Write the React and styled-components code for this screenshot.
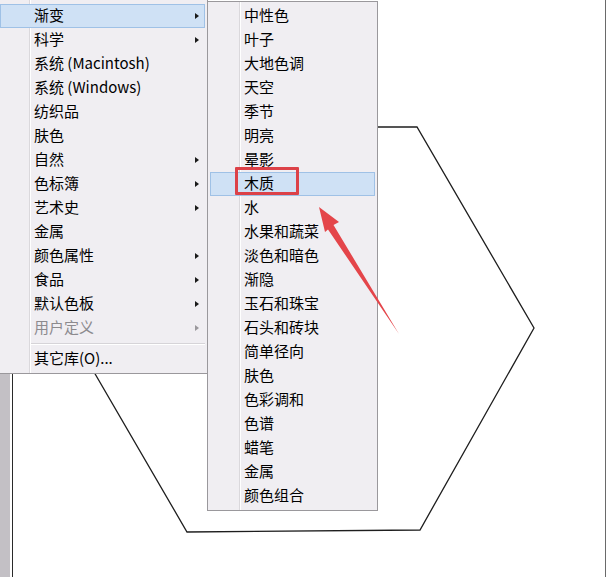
import React from "react";
import styled, { createGlobalStyle } from "styled-components";

const Global = createGlobalStyle`
  html, body { margin: 0; padding: 0; background: #fff; }
  body { font-family: "Noto Sans CJK SC", "Noto Sans", sans-serif; }
  #root { width: 608px; height: 577px; overflow: hidden; }
`;

const Page = styled.div`
  position: relative;
  width: 608px;
  height: 577px;
  display: flex;
  background: #fff;
  overflow: hidden;
`;

const Rail = styled.div`
  width: 10px;
  background: #c3c0c5;
  margin-right: 2px;
`;

const Canvas = styled.div`
  position: relative;
  flex: 1;
  border-left: 1px solid #2a2a2a;
  border-right: 1px solid #6a6a6a;
  margin-right: 2px;
  background: #fff;
`;

const Drawing = styled.svg`
  position: absolute;
  left: -13px;
  top: 0;
  width: 608px;
  height: 577px;
`;

const Menu = styled.div`
  position: absolute;
  left: ${(p) => p.$left}px;
  top: ${(p) => p.$top}px;
  width: ${(p) => p.$width}px;
  box-sizing: border-box;
  background: #f0eef2;
  border: 1px solid #9a989c;
  padding: ${(p) => p.$padTop}px 2px 2px 2px;
  display: flex;
  flex-direction: column;
  z-index: ${(p) => p.$z};
`;

const Gutter = styled.div`
  position: absolute;
  top: 0;
  bottom: 0;
  left: 31px;
  width: 1px;
  background: #dad8dc;
  box-shadow: 1px 0 0 #ffffff;
`;

const Item = styled.div`
  position: relative;
  height: 24px;
  box-sizing: border-box;
  display: flex;
  align-items: center;
  padding-left: 34px;
  padding-right: 6px;
  padding-bottom: 2px;
  font-size: 15px;
  line-height: 20px;
  color: ${(p) => (p.$disabled ? "#8c8a8e" : "#000")};
  background: ${(p) => (p.$active ? "#cfe1f5" : "transparent")};
  border: 1px solid ${(p) => (p.$active ? "#9fc1e6" : "transparent")};
  z-index: 1;
  white-space: nowrap;
`;

const Label = styled.span`
  flex: 1;
  margin-left: -1px;
`;

const Arrow = styled.span`
  width: 0;
  height: 0;
  border-top: 3.5px solid transparent;
  border-bottom: 3.5px solid transparent;
  border-left: 4px solid ${(p) => (p.$disabled ? "#9a989c" : "#1a1a1a")};
  margin-right: -1px;
  margin-top: 2px;
`;

const Separator = styled.div`
  height: 7px;
  display: flex;
  align-items: center;
  padding-left: 30px;
  &::after {
    content: "";
    flex: 1;
    height: 1px;
    background: #d6d4d8;
    box-shadow: 0 1px 0 #ffffff;
  }
`;

const Callout = styled.div`
  position: absolute;
  left: 235px;
  top: 167px;
  width: 64px;
  height: 28px;
  box-sizing: border-box;
  border: 3px solid #dc4148;
  border-radius: 1px;
  z-index: 5;
`;

const Pointer = styled.svg`
  position: absolute;
  left: 0;
  top: 0;
  width: 608px;
  height: 577px;
  z-index: 6;
  pointer-events: none;
`;

const mainItems = [
  { t: "渐变", sub: true, active: true },
  { t: "科学", sub: true },
  { t: "系统 (Macintosh)" },
  { t: "系统 (Windows)" },
  { t: "纺织品" },
  { t: "肤色" },
  { t: "自然", sub: true },
  { t: "色标簿", sub: true },
  { t: "艺术史", sub: true },
  { t: "金属" },
  { t: "颜色属性", sub: true },
  { t: "食品", sub: true },
  { t: "默认色板", sub: true },
  { t: "用户定义", sub: true, disabled: true },
];

const subItems = [
  "中性色", "叶子", "大地色调", "天空", "季节", "明亮", "晕影", "木质", "水",
  "水果和蔬菜", "淡色和暗色", "渐隐", "玉石和珠宝", "石头和砖块", "简单径向",
  "肤色", "色彩调和", "色谱", "蜡笔", "金属", "颜色组合",
];

export default function App() {
  return (
    <>
      <Global />
      <Page>
        <Rail />
        <Canvas>
          <Drawing viewBox="0 0 608 577">
            <polygon
              points="187,127 417,127 534,328 420,530 187,532 69,329"
              fill="none"
              stroke="#1e1e1e"
              strokeWidth="1.3"
            />
          </Drawing>
        </Canvas>

        <Menu $left={-3} $top={-1} $width={211} $padTop={4} $z={2}>
          <Gutter />
          {mainItems.map((it) => (
            <Item key={it.t} $active={it.active} $disabled={it.disabled}>
              <Label>{it.t}</Label>
              {it.sub && <Arrow $disabled={it.disabled} />}
            </Item>
          ))}
          <Separator />
          <Item>
            <Label>其它库(O)...</Label>
          </Item>
        </Menu>

        <Menu $left={207} $top={1} $width={171} $padTop={2} $z={3}>
          <Gutter />
          {subItems.map((t) => (
            <Item key={t} $active={t === "木质"}>
              <Label>{t}</Label>
            </Item>
          ))}
        </Menu>

        <Callout />
        <Pointer viewBox="0 0 608 577">
          <polygon
            points="319,207 339,222 333.5,225 399,334 328,229.5 325,232"
            fill="#e4454a"
          />
        </Pointer>
      </Page>
    </>
  );
}
